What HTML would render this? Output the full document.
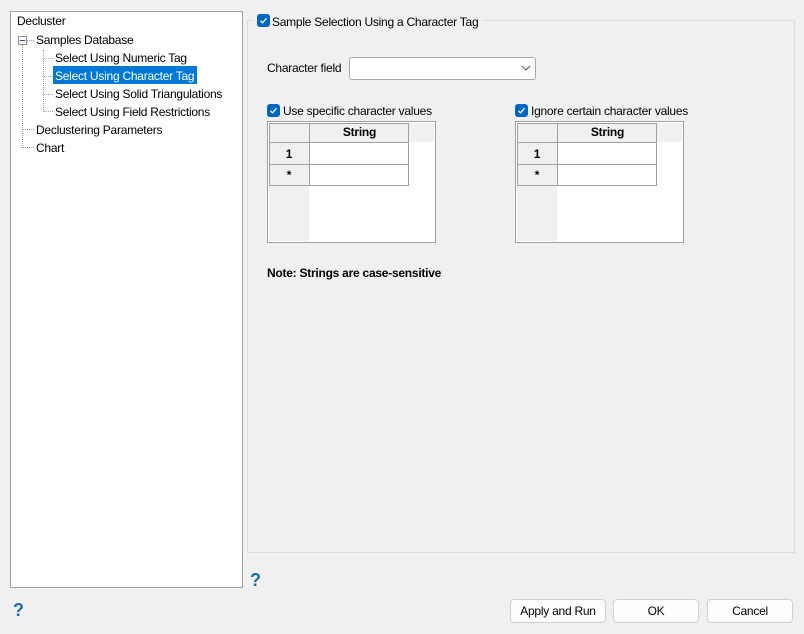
<!DOCTYPE html>
<html><head><style>
*{box-sizing:border-box;margin:0;padding:0}
body{width:804px;height:634px;background:#f0f0f0;font-family:"Liberation Sans",sans-serif;font-size:12px;letter-spacing:-0.25px;color:#000;position:relative;overflow:hidden}
.a{position:absolute;white-space:nowrap}
.cb{position:absolute;width:13px;height:13px;background:#0067c0;border-radius:3px}
.cb svg{position:absolute;left:0;top:0}
.btn{position:absolute;height:24px;background:#fdfdfd;border:1px solid #d0d0d0;border-radius:4px;text-align:center;line-height:22px}
.dot{position:absolute;border-color:#a0a0a0;border-style:dotted;border-width:0}
.tbl{position:absolute;width:169px;height:122px;border:1px solid #a0a0a0;background:#fff}
.q{position:absolute;color:#1a6fa8;font-weight:bold;font-size:18px}
</style></head><body>
<div class="a" style="left:10px;top:11px;width:233px;height:577px;background:#fff;border:1px solid #a0a0a0"></div>
<div class="a" style="left:17px;top:14px">Decluster</div>
<div class="a" style="left:18px;top:36px;width:9px;height:9px;border:1px solid #919191;background:#fff"></div>
<div class="a" style="left:20px;top:40px;width:5px;height:1px;background:#2c4a8a"></div>
<div class="dot" style="left:22px;top:45px;height:103px;border-left-width:1px"></div>
<div class="dot" style="left:27px;top:40px;width:7px;border-top-width:1px"></div>
<div class="a" style="left:36px;top:33px">Samples Database</div>
<div class="dot" style="left:43px;top:50px;height:62px;border-left-width:1px"></div>
<div class="dot" style="left:44px;top:58px;width:9px;border-top-width:1px"></div>
<div class="dot" style="left:44px;top:76px;width:9px;border-top-width:1px"></div>
<div class="dot" style="left:44px;top:94px;width:9px;border-top-width:1px"></div>
<div class="dot" style="left:44px;top:111px;width:9px;border-top-width:1px"></div>
<div class="a" style="left:55px;top:51px">Select Using Numeric Tag</div>
<div class="a" style="left:53px;top:66px;width:144px;height:18px;background:#0078d7"></div>
<div class="a" style="left:55px;top:69px;color:#fff">Select Using Character Tag</div>
<div class="a" style="left:55px;top:87px">Select Using Solid Triangulations</div>
<div class="a" style="left:55px;top:105px">Select Using Field Restrictions</div>
<div class="dot" style="left:23px;top:129px;width:11px;border-top-width:1px"></div>
<div class="dot" style="left:23px;top:147px;width:11px;border-top-width:1px"></div>
<div class="a" style="left:36px;top:123px">Declustering Parameters</div>
<div class="a" style="left:36px;top:141px">Chart</div>

<div class="a" style="left:247px;top:20px;width:548px;height:533px;border:1px solid #dcdcdc"></div>
<div class="a" style="left:254px;top:12px;width:228px;height:18px;background:#f0f0f0"></div>
<div class="cb" style="left:257px;top:14px"><svg width="13" height="13"><path d="M3.5 6.8l2 2 4-4.5" stroke="#fff" stroke-width="1.3" fill="none"/></svg></div>
<div class="a" style="left:272px;top:15px">Sample Selection Using a Character Tag</div>

<div class="a" style="left:267px;top:61px">Character field</div>
<div class="a" style="left:349px;top:57px;width:187px;height:23px;background:#fff;border:1px solid #a8a8a8;border-radius:3px"></div>
<svg class="a" style="left:521px;top:65px" width="10" height="6"><path d="M1 1l4 4 4-4" stroke="#555" fill="none"/></svg>

<div class="cb" style="left:267px;top:104px"><svg width="13" height="13"><path d="M3.5 6.8l2 2 4-4.5" stroke="#fff" stroke-width="1.3" fill="none"/></svg></div>
<div class="a" style="left:283px;top:104px">Use specific character values</div>
<div class="cb" style="left:515px;top:104px"><svg width="13" height="13"><path d="M3.5 6.8l2 2 4-4.5" stroke="#fff" stroke-width="1.3" fill="none"/></svg></div>
<div class="a" style="left:531px;top:104px">Ignore certain character values</div>

<div class="tbl" style="left:267px;top:121px">
 <div class="a" style="left:1px;top:1px;width:165px;height:19px;background:#f0f0f0"></div>
 <div class="a" style="left:1px;top:1px;width:40px;height:118px;background:#f0f0f0"></div>
 <div class="a" style="left:1px;top:1px;width:140px;height:63px;border:1px solid #a0a0a0"></div>
 <div class="a" style="left:42px;top:21px;width:98px;height:42px;background:#fff"></div>
 <div class="a" style="left:41px;top:1px;width:1px;height:63px;background:#a0a0a0"></div>
 <div class="a" style="left:1px;top:20px;width:140px;height:1px;background:#a0a0a0"></div>
 <div class="a" style="left:1px;top:42px;width:140px;height:1px;background:#a0a0a0"></div>
 <div class="a" style="left:42px;top:3px;width:99px;text-align:center;font-weight:bold">String</div>
 <div class="a" style="left:1px;top:25px;width:40px;text-align:center;font-weight:bold">1</div>
 <div class="a" style="left:1px;top:46px;width:40px;text-align:center;font-weight:bold">*</div>
</div>
<div class="tbl" style="left:515px;top:121px">
 <div class="a" style="left:1px;top:1px;width:165px;height:19px;background:#f0f0f0"></div>
 <div class="a" style="left:1px;top:1px;width:40px;height:118px;background:#f0f0f0"></div>
 <div class="a" style="left:1px;top:1px;width:140px;height:63px;border:1px solid #a0a0a0"></div>
 <div class="a" style="left:42px;top:21px;width:98px;height:42px;background:#fff"></div>
 <div class="a" style="left:41px;top:1px;width:1px;height:63px;background:#a0a0a0"></div>
 <div class="a" style="left:1px;top:20px;width:140px;height:1px;background:#a0a0a0"></div>
 <div class="a" style="left:1px;top:42px;width:140px;height:1px;background:#a0a0a0"></div>
 <div class="a" style="left:42px;top:3px;width:99px;text-align:center;font-weight:bold">String</div>
 <div class="a" style="left:1px;top:25px;width:40px;text-align:center;font-weight:bold">1</div>
 <div class="a" style="left:1px;top:46px;width:40px;text-align:center;font-weight:bold">*</div>
</div>

<div class="a" style="left:267px;top:266px;font-weight:bold">Note: Strings are case-sensitive</div>

<div class="q" style="left:250px;top:570px">?</div>
<div class="q" style="left:13px;top:600px">?</div>
<div class="btn" style="left:510px;top:599px;width:96px">Apply and Run</div>
<div class="btn" style="left:613px;top:599px;width:86px">OK</div>
<div class="btn" style="left:707px;top:599px;width:86px">Cancel</div>
</body></html>
